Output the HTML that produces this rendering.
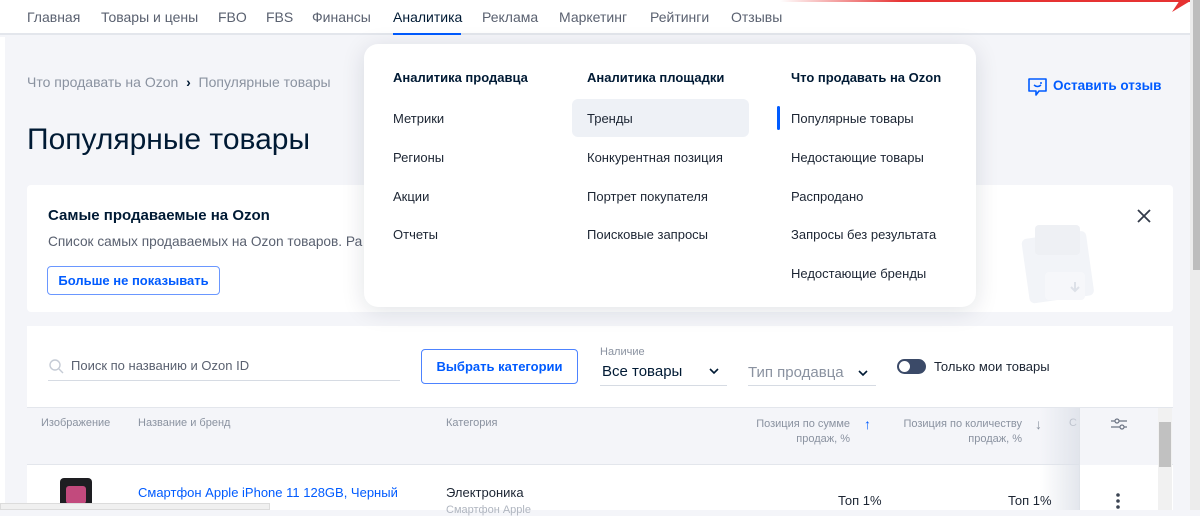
<!DOCTYPE html>
<html><head><meta charset="utf-8"><style>
*{box-sizing:border-box;margin:0;padding:0}
body{width:1200px;height:510px;overflow:hidden;background:#f4f5f9;font-family:"Liberation Sans",sans-serif;position:relative;color:#001a34}
.a{position:absolute;white-space:nowrap}
.nav{position:absolute;left:0;top:0;width:1190px;height:35px;background:#fff;border-bottom:2px solid #e3e6ec}
.nav span{position:absolute;top:9px;font-size:14px;color:#5a6170}
.menu{position:absolute;left:364px;top:44px;width:612px;height:263px;background:#fff;border-radius:14px;box-shadow:0 4px 24px rgba(0,26,52,.12)}
.menu .a{font-size:13px;color:#1c2533}
.menu .h{font-weight:bold;color:#001a34}
</style></head><body>
<div class="nav">
<span style="left:27px">Главная</span><span style="left:101px">Товары и цены</span><span style="left:218px">FBO</span><span style="left:266px">FBS</span><span style="left:312px">Финансы</span><span style="left:393px;color:#001a34">Аналитика</span><span style="left:482px">Реклама</span><span style="left:559px">Маркетинг</span><span style="left:650px">Рейтинги</span><span style="left:731px">Отзывы</span>
<div class="a" style="left:393px;top:33px;width:68px;height:2px;background:#005bff"></div>
</div>
<div class="a" style="left:780px;top:0;width:410px;height:2px;background:linear-gradient(90deg,rgba(230,50,50,0),#e63232 30%)"></div>
<svg class="a" style="left:1172px;top:0" width="20" height="14"><path d="M0 12L20 0H8Z" fill="#e63232"/></svg>
<div class="a" style="left:1190px;top:0;width:10px;height:510px;background:#ececec"></div>
<div class="a" style="left:1193px;top:0;width:7px;height:270px;background:#bdbdbd"></div>
<div class="a" style="left:0;top:37px;width:5px;height:473px;background:#fff"></div>

<div class="a" style="left:27px;top:74px;font-size:14px;color:#8a92a0">Что продавать на Ozon &nbsp;<b style="color:#001a34">›</b>&nbsp; Популярные товары</div>
<div class="a" style="left:27px;top:123px;font-size:30px;color:#001a34">Популярные товары</div>
<svg class="a" style="left:1027px;top:76px" width="22" height="22" viewBox="0 0 22 22"><path d="M2 3h17v12H12l-3 4v-4H2z" fill="none" stroke="#005bff" stroke-width="1.6" stroke-linejoin="round"/><path d="M7 9q3.5 3 7 0" fill="none" stroke="#005bff" stroke-width="1.5"/><circle cx="14" cy="7" r="1" fill="#005bff"/></svg>
<div class="a" style="left:1053px;top:78px;font-size:13.5px;color:#005bff;font-weight:bold">Оставить отзыв</div>

<div class="a" style="left:27px;top:185px;width:1146px;height:127px;background:#fff;border-radius:4px"></div>
<div class="a" style="left:48px;top:207px;font-size:15px;font-weight:bold;color:#001a34">Самые продаваемые на Ozon</div>
<div class="a" style="left:48px;top:234px;font-size:13.7px;color:#5a6170">Список самых продаваемых на Ozon товаров. Ра</div>
<div class="a" style="left:47px;top:266px;width:173px;height:29px;border:1px solid #6a97ff;border-radius:4px;font-size:13px;font-weight:bold;color:#005bff;text-align:center;line-height:27px">Больше не показывать</div>
<svg class="a" style="left:1136px;top:208px" width="16" height="16"><path d="M2 2L14 14M14 2L2 14" stroke="#333b4a" stroke-width="1.8"/></svg>
<svg class="a" style="left:1005px;top:210px" width="110" height="95"><rect x="20" y="25" width="65" height="65" rx="5" fill="#f2f4f8" transform="rotate(-8 50 55)"/><rect x="30" y="15" width="45" height="30" rx="4" fill="#eef0f4"/><rect x="40" y="62" width="40" height="28" rx="4" fill="#f6f7fa"/><path d="M70 72v8m-4-3l4 4 4-4" stroke="#dde1e8" fill="none" stroke-width="2"/></svg>

<div class="a" style="left:27px;top:326px;width:1146px;height:184px;background:#fff"></div>
<svg class="a" style="left:48px;top:358px" width="16" height="16"><circle cx="7" cy="7" r="5" fill="none" stroke="#c5cbd5" stroke-width="1.4"/><path d="M11 11l4 4" stroke="#c5cbd5" stroke-width="1.4"/></svg>
<div class="a" style="left:71px;top:358px;font-size:13px;color:#5a6170">Поиск по названию и Ozon ID</div>
<div class="a" style="left:48px;top:380px;width:352px;height:1px;background:#d6dbe3"></div>
<div class="a" style="left:421px;top:349px;width:157px;height:35px;border:1px solid #4d83ff;border-radius:4px;font-size:13px;font-weight:bold;color:#005bff;text-align:center;line-height:33px">Выбрать категории</div>
<div class="a" style="left:600px;top:346px;font-size:11px;color:#8a92a0">Наличие</div>
<div class="a" style="left:602px;top:363px;font-size:15px;color:#001a34">Все товары</div>
<div class="a" style="left:600px;top:385px;width:127px;height:1px;background:#d6dbe3"></div>
<div class="a" style="left:748px;top:364px;font-size:15px;color:#8a92a0">Тип продавца</div>
<div class="a" style="left:748px;top:385px;width:128px;height:1px;background:#d6dbe3"></div>
<svg class="a" style="left:709px;top:367px" width="10" height="8"><path d="M1 2l4 4 4-4" stroke="#001a34" stroke-width="1.6" fill="none"/></svg>
<svg class="a" style="left:858px;top:369px" width="10" height="8"><path d="M1 2l4 4 4-4" stroke="#001a34" stroke-width="1.6" fill="none"/></svg>
<div class="a" style="left:897px;top:359px;width:29px;height:15px;border-radius:8px;background:#3b4a68"></div>
<div class="a" style="left:899px;top:361px;width:11px;height:11px;border-radius:6px;background:#fff"></div>
<div class="a" style="left:934px;top:359px;font-size:13px;color:#1c2533">Только мои товары</div>

<div class="a" style="left:27px;top:407px;width:1146px;height:58px;background:#f4f5f9;border-top:1px solid #e3e6ec;border-bottom:1px solid #e3e6ec"></div>
<div class="a" style="left:41px;top:417px;font-size:11px;color:#8a92a0">Изображение</div>
<div class="a" style="left:138px;top:417px;font-size:11px;color:#8a92a0">Название и бренд</div>
<div class="a" style="left:446px;top:417px;font-size:11px;color:#8a92a0">Категория</div>
<div class="a" style="left:738px;top:417px;font-size:11px;color:#8a92a0;text-align:right;width:112px;line-height:15px">Позиция по сумме<br>продаж, %</div>
<div class="a" style="left:864px;top:416px;font-size:14px;color:#005bff">↑</div>
<div class="a" style="left:880px;top:417px;font-size:11px;color:#8a92a0;text-align:right;width:142px;line-height:15px">Позиция по количеству<br>продаж, %</div>
<div class="a" style="left:1035px;top:416px;font-size:14px;color:#8a92a0">↓</div>
<div class="a" style="left:1069px;top:417px;font-size:11px;color:#8a92a0">С</div>
<div class="a" style="left:1040px;top:408px;width:40px;height:102px;background:linear-gradient(90deg,rgba(230,233,239,0),rgba(220,224,232,.8))"></div>
<div class="a" style="left:1079px;top:408px;width:1px;height:102px;background:#dfe3e9"></div>
<div class="a" style="left:1080px;top:408px;width:78px;height:57px;background:#f4f5f9"></div>
<svg class="a" style="left:1109px;top:416px" width="20" height="16"><path d="M2 5h16M2 11h16" stroke="#6b7383" stroke-width="1.2"/><circle cx="8" cy="5" r="2" fill="#f4f5f9" stroke="#6b7383" stroke-width="1.2"/><circle cx="13" cy="11" r="2" fill="#f4f5f9" stroke="#6b7383" stroke-width="1.2"/></svg>
<div class="a" style="left:1158px;top:408px;width:14px;height:102px;background:#f1f1f1"></div>
<div class="a" style="left:1159px;top:422px;width:12px;height:45px;background:#c1c1c1"></div>

<div class="a" style="left:60px;top:478px;width:32px;height:32px;background:#1e1e22;border-radius:4px"></div>
<div class="a" style="left:66px;top:486px;width:20px;height:18px;background:#c24a7d;border-radius:3px"></div>
<div class="a" style="left:138px;top:485px;font-size:13px;color:#005bff">Смартфон Apple iPhone 11 128GB, Черный</div>
<div class="a" style="left:446px;top:485px;font-size:13px;color:#1c2533">Электроника</div>
<div class="a" style="left:446px;top:504px;font-size:11px;color:#b0b6c0">Смартфон Apple</div>
<div class="a" style="left:838px;top:493px;font-size:13px;color:#1c2533">Топ 1%</div>
<div class="a" style="left:1008px;top:493px;font-size:13px;color:#1c2533">Топ 1%</div>
<svg class="a" style="left:1115px;top:492px" width="6" height="18"><circle cx="3" cy="3" r="1.8" fill="#3b4452"/><circle cx="3" cy="9" r="1.8" fill="#3b4452"/><circle cx="3" cy="15" r="1.8" fill="#3b4452"/></svg>
<div class="a" style="left:0;top:503px;width:270px;height:7px;background:#f0f0f0;border:1px solid #dcdcdc"></div>

<div class="menu">
<div class="a h" style="left:29px;top:26px">Аналитика продавца</div>
<div class="a" style="left:29px;top:67px">Метрики</div>
<div class="a" style="left:29px;top:106px">Регионы</div>
<div class="a" style="left:29px;top:145px">Акции</div>
<div class="a" style="left:29px;top:183px">Отчеты</div>
<div class="a h" style="left:223px;top:26px">Аналитика площадки</div>
<div class="a" style="left:208px;top:55px;width:177px;height:38px;background:#eef1f6;border-radius:6px"></div>
<div class="a" style="left:223px;top:67px">Тренды</div>
<div class="a" style="left:223px;top:106px">Конкурентная позиция</div>
<div class="a" style="left:223px;top:145px">Портрет покупателя</div>
<div class="a" style="left:223px;top:183px">Поисковые запросы</div>
<div class="a h" style="left:427px;top:26px">Что продавать на Ozon</div>
<div class="a" style="left:413px;top:62px;width:3px;height:24px;background:#005bff;border-radius:2px"></div>
<div class="a" style="left:427px;top:67px">Популярные товары</div>
<div class="a" style="left:427px;top:106px">Недостающие товары</div>
<div class="a" style="left:427px;top:145px">Распродано</div>
<div class="a" style="left:427px;top:183px">Запросы без результата</div>
<div class="a" style="left:427px;top:222px">Недостающие бренды</div>
</div>
</body></html>
